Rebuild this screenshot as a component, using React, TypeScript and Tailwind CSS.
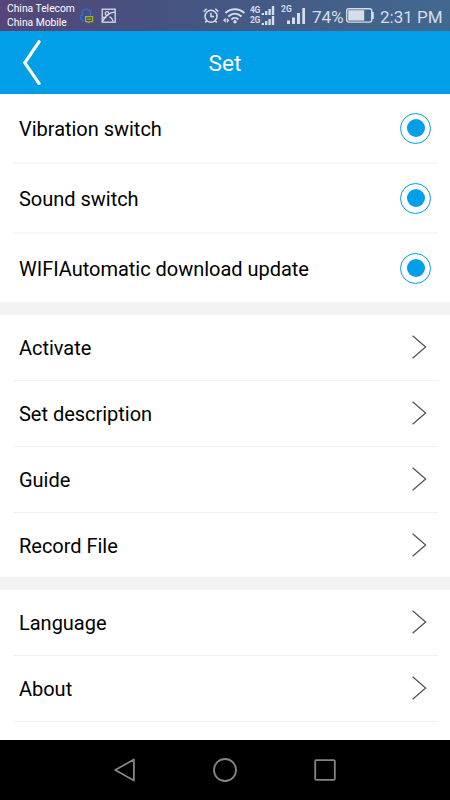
import clsx from 'clsx'

const switches = ['Vibration switch', 'Sound switch', 'WIFIAutomatic download update']
const toolLinks = ['Activate', 'Set description', 'Guide', 'Record File']
const appLinks = ['Language', 'About']

function StatusBar() {
  return (
    <div className="flex h-[31px] shrink-0 items-center bg-linear-to-r from-[#54467a] via-[#45527f] via-35% to-[#41698f] text-[#d5dde9]">
      <div className="w-[72px] pl-[7px] text-[10.3px] leading-[13.5px] whitespace-nowrap text-white">
        <div>China Telecom</div>
        <div>China Mobile</div>
      </div>
      <svg className="ml-[7px] h-4 w-4 shrink-0" viewBox="0 0 16 16" fill="none">
        <path d="M3 8V5.2a4.2 4.2 0 0 1 8.4 0V8M3 6.8L1.6 8v3l1.6.6 1.4 2.2" stroke="#2377dc" strokeWidth="1.2" />
        <path d="M6.6 8.6h7v5h-3l-1 1-1-1h-2z" stroke="#a3b51e" strokeWidth="1.2" />
        <path d="M8.3 11.2h3.8" stroke="#a3b51e" strokeWidth="1.2" />
      </svg>
      <svg className="ml-[6px] h-4 w-4 shrink-0" viewBox="0 0 16 16" fill="none" stroke="currentColor" strokeWidth="1.3">
        <rect x="1.2" y="1.2" width="13" height="13" />
        <circle cx="6" cy="5.5" r="1.8" />
        <path d="M2 13c2.2-5 6-8.3 11.8-8.8M2 9.5l3.4 0M8.6 8.6c1.8 1 3 2.4 3.6 5" />
      </svg>

      <svg className="ml-[85px] h-[18px] w-[18px] shrink-0" viewBox="0 0 18 18" fill="none" stroke="currentColor" strokeWidth="1.5">
        <circle cx="9" cy="9.2" r="6" />
        <path d="M9 5.8v3.8h3M1.7 4.6l3-2.8M16.3 4.6l-3-2.8M4.8 13.8l-1.6 1.8M13.2 13.8l1.6 1.8" />
      </svg>
      <svg className="ml-[3px] h-[18px] w-6 shrink-0" viewBox="0 0 24 18" fill="none" stroke="currentColor" strokeWidth="2">
        <path d="M2.4 6c5.6-5 13.4-5 19 0M5.3 9.4c4-3.6 9.2-3.6 13.2 0M8.4 12.4c2-1.8 5-1.8 7 0" />
        <circle cx="12" cy="14.8" r="1.7" fill="currentColor" stroke="none" />
        <path d="M0 13.3l2.8-2.6v5zM6.4 13.3l-2.6 2.8v-5.2z" fill="currentColor" stroke="none" />
      </svg>
      <div className="-mt-px ml-[3px] flex shrink-0 flex-col text-[8.5px] leading-[10px] font-bold">
        <Signal label="4G" />
        <Signal label="2G" />
      </div>
      <div className="ml-[6px] flex h-[19px] shrink-0 items-start">
        <span className="w-[6px] text-[8.5px] leading-[6px] font-bold">2G</span>
        <svg className="mt-[2px] h-[17px] w-[19px]" viewBox="0 0 19 17" fill="currentColor">
          <path d="M0 12.5h3V16H0zM5 9.5h3V16H5zM10 5h3v11h-3zM15.3 0h2.7v16h-2.7z" />
        </svg>
      </div>
      <span className="ml-[6px] w-[33px] shrink-0 pt-[2px] text-[17.3px] leading-5 tracking-[-0.2px]">74%</span>
      <svg className="ml-px h-[15px] w-[28px] shrink-0" viewBox="0 0 28 15" fill="none">
        <rect x="0.7" y="0.7" width="25" height="13.4" rx="2" stroke="currentColor" strokeWidth="1.4" />
        <rect x="2.2" y="2.2" width="16" height="10.4" fill="currentColor" />
        <path d="M26 4h1.8v7H26z" fill="currentColor" />
      </svg>
      <span className="ml-[6px] pt-[2px] text-[17px] leading-5 whitespace-nowrap">2:31 PM</span>
    </div>
  )
}

function Signal({ label }: { label: string }) {
  return (
    <div className="flex items-center">
      <span className="w-[11px] tracking-[-0.3px]">{label}</span>
      <svg className="h-[9px] w-[14px]" viewBox="0 0 14 9" fill="currentColor">
        <path d="M0.6 7h2.4v2H0.6zM4 5h2.4v4H4zM7.4 3h2.4v6H7.4zM10.8 0h2.4v9h-2.4z" />
      </svg>
    </div>
  )
}

function Row({ label, last, toggle }: { label: string; last?: boolean; toggle?: boolean }) {
  return (
    <div
      className={clsx(
        'mx-[12.5px] flex shrink-0 items-center justify-between pl-[6.5px] text-xl text-black',
        toggle ? 'h-[70px] border-b-2 pr-[6.5px]' : 'h-[66px] border-b pr-[11px]',
        last ? 'border-transparent' : toggle ? 'border-[#f7f7f7]' : 'border-[#f0f0f0]',
      )}
    >
      <span className={clsx('tracking-[-0.02px]', toggle ? 'pt-[2px]' : 'pt-[0.5px]')}>{label}</span>
      {toggle ? (
        <span className="flex h-[31px] w-[31px] items-center justify-center rounded-full border border-[#009fe8]">
          <span className="h-[18px] w-[18px] rounded-full bg-[#009fe8]" />
        </span>
      ) : (
        <svg className="mb-[1px] h-6 w-4" viewBox="0 0 16 24" fill="none" stroke="#555" strokeWidth="1.3">
          <path d="M1.6 0.8L14.6 12 1.6 23.2" />
        </svg>
      )}
    </div>
  )
}

function NavBar() {
  return (
    <nav className="flex h-[60px] shrink-0 items-center justify-center gap-[76px] bg-black">
      <svg className="h-6 w-6" viewBox="0 0 24 24" fill="none" stroke="#858585" strokeWidth="1.8" strokeLinejoin="round">
        <path d="M2.2 12L20.9 1.5v21z" />
      </svg>
      <svg className="h-6 w-6" viewBox="0 0 24 24" fill="none" stroke="#858585" strokeWidth="1.8">
        <circle cx="12" cy="12" r="11" />
      </svg>
      <svg className="h-6 w-6" viewBox="0 0 24 24" fill="none" stroke="#858585" strokeWidth="1.8">
        <rect x="2.2" y="2.2" width="19.6" height="19.6" rx="1" />
      </svg>
    </nav>
  )
}

export default function App() {
  return (
    <div className="flex h-[800px] w-[450px] flex-col overflow-hidden bg-white font-['Roboto',sans-serif]">
      <StatusBar />
      <header className="grid h-[63px] shrink-0 grid-cols-3 items-center bg-[#009fe8] text-white">
        <svg className="ml-[22px] h-[46px] w-5" viewBox="0 0 20 46" fill="none" stroke="currentColor" strokeWidth="3.2">
          <path d="M17 1.8L2.8 22.8 17 43.4" strokeLinecap="round" />
        </svg>
        <h1 className="pt-[4px] text-center text-[22.7px]">Set</h1>
      </header>
      <main className="flex min-h-0 flex-1 flex-col overflow-hidden">
        <section>
          {switches.map((label, i) => (
            <Row key={label} label={label} toggle last={i === switches.length - 1} />
          ))}
        </section>
        <div className="-mt-[2px] h-[13px] shrink-0 bg-[#f3f3f3]" />
        <section>
          {toolLinks.map((label, i) => (
            <Row key={label} label={label} last={i === toolLinks.length - 1} />
          ))}
        </section>
        <div className="-mt-[2px] h-[13px] shrink-0 bg-[#f3f3f3]" />
        <section>
          {appLinks.map((label) => (
            <Row key={label} label={label} />
          ))}
        </section>
      </main>
      <NavBar />
    </div>
  )
}
